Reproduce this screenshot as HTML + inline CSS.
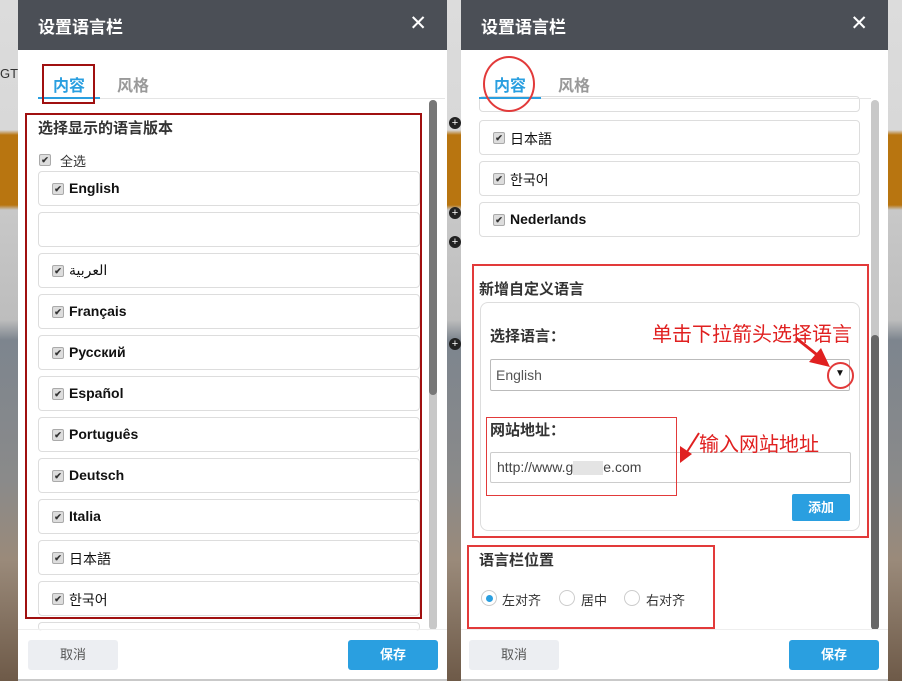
<!DOCTYPE html>
<html><head><meta charset="utf-8"><style>
*{margin:0;padding:0;box-sizing:border-box}
body{width:902px;height:681px;position:relative;overflow:hidden;font-family:"Liberation Sans","Noto Sans CJK SC",sans-serif;background:#c9c9c9}
.a{position:absolute}
.strip{position:absolute;top:0;height:681px;background:linear-gradient(#dcdcdc 0,#d8d8d8 130px,#b87510 135px,#b87510 205px,#c8c8c8 210px,#bdbdbd 320px,#7d858e 340px,#8a8a8a 480px,#9a8a7a 560px,#6e5a48 681px)}
.panel{position:absolute;top:0;height:679px;background:#fff}
.hd{position:absolute;left:0;top:0;right:0;height:50px;background:#4b4f56;color:#fff;font-weight:bold;font-size:17px}
.hd .t{position:absolute;left:20px;top:13px}
.hd .x{position:absolute;right:20px;top:11px;font-size:21px;font-weight:normal}
.tab1{position:absolute;top:72px;font-size:16px;color:#2a9fe0;font-weight:bold}
.tab2{position:absolute;top:72px;font-size:16px;color:#999;font-weight:bold}
.item{position:absolute;height:35px;border:1px solid #ddd;border-radius:4px;background:#fff;font-size:14px;font-weight:bold;color:#111;padding:8px 0 0 30px}
.cb{position:absolute;left:13px;top:11px;width:12px;height:12px;background:#ddd;border:1px solid #aaa;border-radius:2px;font-size:9px;line-height:10px;text-align:center;color:#333;font-weight:bold}
.btn{position:absolute;top:640px;width:90px;height:30px;border-radius:3px;font-size:13px;text-align:center;line-height:30px}
.c{background:#eceef2;color:#555}
.s{background:#2a9fe0;color:#fff;font-weight:bold}
.red{position:absolute;border:2px solid #e23a3a}
.lbl{position:absolute;font-size:15px;font-weight:bold;color:#333}
.ann{position:absolute;font-size:20px;color:#e02020}
.rad{position:absolute;width:16px;height:16px;border:1px solid #ccc;border-radius:50%;background:#fff}
</style></head><body>
<div class="strip" style="left:0;width:18px"></div>
<div class="strip" style="left:447px;width:14px"></div>
<div class="strip" style="left:888px;width:14px"></div>
<div class="a" style="left:0;top:66px;font-size:13px;color:#333">GT</div>
<div class="a" style="left:449px;top:117px;width:12px;height:12px;border-radius:50%;background:#222;color:#fff;font-size:11px;line-height:12px;text-align:center">+</div>
<div class="a" style="left:449px;top:207px;width:12px;height:12px;border-radius:50%;background:#222;color:#fff;font-size:11px;line-height:12px;text-align:center">+</div>
<div class="a" style="left:449px;top:236px;width:12px;height:12px;border-radius:50%;background:#222;color:#fff;font-size:11px;line-height:12px;text-align:center">+</div>
<div class="a" style="left:449px;top:338px;width:12px;height:12px;border-radius:50%;background:#222;color:#fff;font-size:11px;line-height:12px;text-align:center">+</div>

<!-- LEFT PANEL -->
<div class="panel" style="left:18px;width:429px">
<div class="hd"><span class="t">设置语言栏</span><span class="x">✕</span></div>
<div class="tab1" style="left:35px">内容</div>
<div class="tab2" style="left:99px">风格</div>
<div class="a" style="left:20px;top:98px;width:407px;height:1px;background:#e5e5e5"></div>
<div class="a" style="left:20px;top:97px;width:62px;height:2px;background:#2a9fe0"></div>
<div class="a" style="left:24px;top:64px;width:53px;height:40px;border:2px solid #a01010"></div>
<div class="a" style="left:411px;top:100px;width:8px;height:530px;border-radius:4px;background:#c8c8c8"></div>
<div class="a" style="left:411px;top:100px;width:8px;height:295px;border-radius:4px;background:#777"></div>
<div class="lbl" style="left:20px;top:117px">选择显示的语言版本</div>
<div class="cb" style="left:21px;top:154px">✔</div>
<div class="a" style="left:42px;top:151px;font-size:13px;color:#333">全选</div>
<div class="item" style="left:20px;top:171px;width:382px"><span class="cb">✔</span>English</div>
<div class="item" style="left:20px;top:212px;width:382px"></div>
<div class="item" style="left:20px;top:253px;width:382px;font-weight:normal"><span class="cb">✔</span>العربية</div>
<div class="item" style="left:20px;top:294px;width:382px"><span class="cb">✔</span>Français</div>
<div class="item" style="left:20px;top:335px;width:382px"><span class="cb">✔</span>Русский</div>
<div class="item" style="left:20px;top:376px;width:382px"><span class="cb">✔</span>Español</div>
<div class="item" style="left:20px;top:417px;width:382px"><span class="cb">✔</span>Português</div>
<div class="item" style="left:20px;top:458px;width:382px"><span class="cb">✔</span>Deutsch</div>
<div class="item" style="left:20px;top:499px;width:382px"><span class="cb">✔</span>Italia</div>
<div class="item" style="left:20px;top:540px;width:382px;font-weight:normal"><span class="cb">✔</span>日本語</div>
<div class="item" style="left:20px;top:581px;width:382px;font-weight:normal"><span class="cb">✔</span>한국어</div>
<div class="item" style="left:20px;top:622px;width:382px;height:7px;border-bottom:none"></div>
<div class="a" style="left:7px;top:113px;width:397px;height:506px;border:2px solid #a01010"></div>
<div class="a" style="left:0;top:629px;width:429px;height:1px;background:#eee"></div>
<div class="btn c" style="left:10px">取消</div>
<div class="btn s" style="left:330px">保存</div>
</div>

<!-- RIGHT PANEL -->
<div class="panel" style="left:461px;width:427px">
<div class="hd"><span class="t">设置语言栏</span><span class="x">✕</span></div>
<div class="tab1" style="left:33px">内容</div>
<div class="tab2" style="left:97px">风格</div>
<div class="item" style="left:18px;top:96px;width:381px;height:16px"></div>
<div class="a" style="left:18px;top:98px;width:392px;height:1px;background:#e5e5e5"></div>
<div class="a" style="left:18px;top:97px;width:62px;height:2px;background:#2a9fe0"></div>
<div class="a" style="left:22px;top:56px;width:52px;height:56px;border:2px solid #e23a3a;border-radius:50%"></div>
<div class="item" style="left:18px;top:120px;width:381px;font-weight:normal"><span class="cb">✔</span>日本語</div>
<div class="item" style="left:18px;top:161px;width:381px;font-weight:normal"><span class="cb">✔</span>한국어</div>
<div class="item" style="left:18px;top:202px;width:381px"><span class="cb">✔</span>Nederlands</div>
<div class="a" style="left:410px;top:100px;width:8px;height:530px;border-radius:4px;background:#c8c8c8"></div>
<div class="a" style="left:410px;top:335px;width:8px;height:295px;border-radius:4px;background:#666"></div>
<div class="lbl" style="left:18px;top:278px">新增自定义语言</div>
<div class="a" style="left:19px;top:302px;width:380px;height:229px;border:1px solid #ddd;border-radius:8px"></div>
<div class="lbl" style="left:29px;top:325px">选择语言：</div>
<div class="a" style="left:29px;top:359px;width:360px;height:32px;border:1px solid #bbb;border-radius:2px;font-size:14px;color:#555;padding:7px 0 0 5px">English</div>
<div class="a" style="left:374px;top:368px;font-size:10px;color:#111">▼</div>
<div class="lbl" style="left:29px;top:419px">网站地址：</div>
<div class="a" style="left:29px;top:452px;width:361px;height:31px;border:1px solid #ccc;border-radius:2px;font-size:14px;color:#444;padding:6px 0 0 6px">http://www.g<span style="display:inline-block;width:30px;height:14px;background:#e4e4e4;vertical-align:middle"></span>e.com</div>
<div class="a" style="left:331px;top:494px;width:58px;height:27px;border-radius:2px;background:#2a9fe0;color:#fff;font-size:13px;font-weight:bold;text-align:center;line-height:27px">添加</div>
<div class="red" style="left:11px;top:264px;width:397px;height:274px"></div>
<div class="a" style="left:25px;top:417px;width:191px;height:79px;border:1px solid #e23a3a"></div>
<div class="ann" style="left:191px;top:318px">单击下拉箭头选择语言</div>
<div class="ann" style="left:238px;top:428px">输入网站地址</div>
<div class="a" style="left:366px;top:362px;width:27px;height:27px;border:2px solid #e23a3a;border-radius:50%"></div>
<svg class="a" style="left:0;top:0" width="427" height="681"><line x1="335" y1="338" x2="360" y2="358" stroke="#e02020" stroke-width="3"/><polygon points="369,367 348,362 360,348" fill="#e02020"/><line x1="238" y1="433" x2="224" y2="455" stroke="#e02020" stroke-width="2"/><polygon points="219,463 219,446 231,454" fill="#e02020"/></svg>
<div class="lbl" style="left:18px;top:549px">语言栏位置</div>
<div class="rad" style="left:20px;top:590px"><div class="a" style="left:4px;top:4px;width:7px;height:7px;border-radius:50%;background:#2a9fe0"></div></div>
<div class="a" style="left:41px;top:590px;font-size:13px;color:#333">左对齐</div>
<div class="rad" style="left:98px;top:590px"></div>
<div class="a" style="left:120px;top:590px;font-size:13px;color:#333">居中</div>
<div class="rad" style="left:163px;top:590px"></div>
<div class="a" style="left:185px;top:590px;font-size:13px;color:#333">右对齐</div>
<div class="red" style="left:6px;top:545px;width:248px;height:84px"></div>
<div class="a" style="left:0;top:629px;width:427px;height:1px;background:#eee"></div>
<div class="btn c" style="left:8px">取消</div>
<div class="btn s" style="left:328px">保存</div>
</div>
</body></html>
